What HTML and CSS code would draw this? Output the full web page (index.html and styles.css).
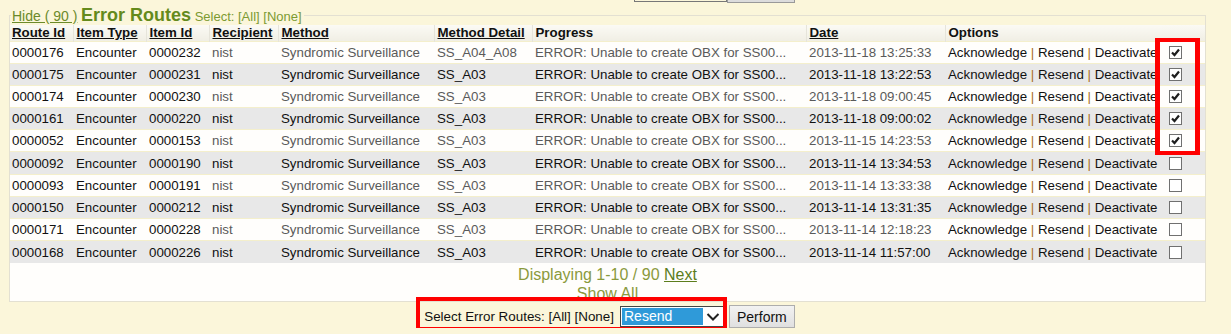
FILE: index.html
```html
<!DOCTYPE html>
<html lang="en">
<head>
    <meta charset="UTF-8">
    <title>Error Routes</title>
    <link rel="stylesheet" href="styles.css">
</head>
<body>
<!-- tail of the bulk bar from the block above -->
<div class="top-tail">
    <span class="tail-select"></span>
    <span class="tail-btn"></span>
</div>

<fieldset class="routes">
    <legend>
        <a href="#" class="toggle">Hide ( 90 )</a>
        <span class="title">Error Routes</span>
        <span class="select-links">Select: [All] [None]</span>
    </legend>
    <div class="routes-box">
        <table class="routes-table">
            <thead>
            <tr>
                <th class="c-id"><a href="#">Route Id</a></th>
                <th class="c-type"><a href="#">Item Type</a></th>
                <th class="c-item"><a href="#">Item Id</a></th>
                <th class="c-rcpt"><a href="#">Recipient</a></th>
                <th class="c-method"><a href="#">Method</a></th>
                <th class="c-detail"><a href="#">Method Detail</a></th>
                <th class="c-progress">Progress</th>
                <th class="c-date"><a href="#">Date</a></th>
                <th class="c-opts">Options</th>
                <th class="c-check"></th>
            </tr>
            </thead>
            <tbody>
            <tr>
                <td>0000176</td><td>Encounter</td><td>0000232</td><td class="soft">nist</td>
                <td class="soft">Syndromic Surveillance</td><td class="soft">SS_A04_A08</td>
                <td class="soft">ERROR: Unable to create OBX for SS00...</td><td class="soft">2013-11-18 13:25:33</td>
                <td class="opts">Acknowledge <i>|</i> Resend <i>|</i> Deactivate</td>
                <td><span class="cb checked"><svg viewBox="0 0 11 11"><path d="M2 5.5 L4.5 8 L9 2.5"/></svg></span></td>
            </tr>
            <tr>
                <td>0000175</td><td>Encounter</td><td>0000231</td><td class="soft">nist</td>
                <td class="soft">Syndromic Surveillance</td><td class="soft">SS_A03</td>
                <td class="soft">ERROR: Unable to create OBX for SS00...</td><td class="soft">2013-11-18 13:22:53</td>
                <td class="opts">Acknowledge <i>|</i> Resend <i>|</i> Deactivate</td>
                <td><span class="cb checked"><svg viewBox="0 0 11 11"><path d="M2 5.5 L4.5 8 L9 2.5"/></svg></span></td>
            </tr>
            <tr>
                <td>0000174</td><td>Encounter</td><td>0000230</td><td class="soft">nist</td>
                <td class="soft">Syndromic Surveillance</td><td class="soft">SS_A03</td>
                <td class="soft">ERROR: Unable to create OBX for SS00...</td><td class="soft">2013-11-18 09:00:45</td>
                <td class="opts">Acknowledge <i>|</i> Resend <i>|</i> Deactivate</td>
                <td><span class="cb checked"><svg viewBox="0 0 11 11"><path d="M2 5.5 L4.5 8 L9 2.5"/></svg></span></td>
            </tr>
            <tr>
                <td>0000161</td><td>Encounter</td><td>0000220</td><td class="soft">nist</td>
                <td class="soft">Syndromic Surveillance</td><td class="soft">SS_A03</td>
                <td class="soft">ERROR: Unable to create OBX for SS00...</td><td class="soft">2013-11-18 09:00:02</td>
                <td class="opts">Acknowledge <i>|</i> Resend <i>|</i> Deactivate</td>
                <td><span class="cb checked"><svg viewBox="0 0 11 11"><path d="M2 5.5 L4.5 8 L9 2.5"/></svg></span></td>
            </tr>
            <tr>
                <td>0000052</td><td>Encounter</td><td>0000153</td><td class="soft">nist</td>
                <td class="soft">Syndromic Surveillance</td><td class="soft">SS_A03</td>
                <td class="soft">ERROR: Unable to create OBX for SS00...</td><td class="soft">2013-11-15 14:23:53</td>
                <td class="opts">Acknowledge <i>|</i> Resend <i>|</i> Deactivate</td>
                <td><span class="cb checked"><svg viewBox="0 0 11 11"><path d="M2 5.5 L4.5 8 L9 2.5"/></svg></span></td>
            </tr>
            <tr>
                <td>0000092</td><td>Encounter</td><td>0000190</td><td class="soft">nist</td>
                <td class="soft">Syndromic Surveillance</td><td class="soft">SS_A03</td>
                <td class="soft">ERROR: Unable to create OBX for SS00...</td><td class="soft">2013-11-14 13:34:53</td>
                <td class="opts">Acknowledge <i>|</i> Resend <i>|</i> Deactivate</td>
                <td><span class="cb"></span></td>
            </tr>
            <tr>
                <td>0000093</td><td>Encounter</td><td>0000191</td><td class="soft">nist</td>
                <td class="soft">Syndromic Surveillance</td><td class="soft">SS_A03</td>
                <td class="soft">ERROR: Unable to create OBX for SS00...</td><td class="soft">2013-11-14 13:33:38</td>
                <td class="opts">Acknowledge <i>|</i> Resend <i>|</i> Deactivate</td>
                <td><span class="cb"></span></td>
            </tr>
            <tr>
                <td>0000150</td><td>Encounter</td><td>0000212</td><td class="soft">nist</td>
                <td class="soft">Syndromic Surveillance</td><td class="soft">SS_A03</td>
                <td class="soft">ERROR: Unable to create OBX for SS00...</td><td class="soft">2013-11-14 13:31:35</td>
                <td class="opts">Acknowledge <i>|</i> Resend <i>|</i> Deactivate</td>
                <td><span class="cb"></span></td>
            </tr>
            <tr>
                <td>0000171</td><td>Encounter</td><td>0000228</td><td class="soft">nist</td>
                <td class="soft">Syndromic Surveillance</td><td class="soft">SS_A03</td>
                <td class="soft">ERROR: Unable to create OBX for SS00...</td><td class="soft">2013-11-14 12:18:23</td>
                <td class="opts">Acknowledge <i>|</i> Resend <i>|</i> Deactivate</td>
                <td><span class="cb"></span></td>
            </tr>
            <tr>
                <td>0000168</td><td>Encounter</td><td>0000226</td><td class="soft">nist</td>
                <td class="soft">Syndromic Surveillance</td><td class="soft">SS_A03</td>
                <td class="soft">ERROR: Unable to create OBX for SS00...</td><td class="soft">2013-11-14 11:57:00</td>
                <td class="opts">Acknowledge <i>|</i> Resend <i>|</i> Deactivate</td>
                <td><span class="cb"></span></td>
            </tr>
            </tbody>
        </table>
        <div class="pager">
            Displaying 1-10 / 90 <a href="#">Next</a><br>
            <span class="show-all">Show All</span>
        </div>
    </div>
</fieldset>

<div class="bulk-bar">
    <span class="bulk-label">Select Error Routes: [All] [None]</span>
    <span class="fake-select">
        <span class="fake-value">Resend</span>
        <svg class="chev" viewBox="0 0 14 10"><path d="M1.5 2 L7 7.5 L12.5 2"/></svg>
    </span>
    <button type="button" class="perform">Perform</button>
</div>

<!-- annotation marks -->
<div class="mark mark-checks"></div>
<div class="mark mark-bulk"></div>
</body>
</html>
```

FILE: styles.css
```css
:root {
    --page-bg: #fbf6da;
    --olive: #6a8c22;
    --olive-light: #8a9a3c;
    --line: #e3e0d2;
    --row-alt: #e8e8e8;
    --row-line: #f4efcc;
}

* {
    box-sizing: border-box;
}

body {
    margin: 0;
    background: var(--page-bg);
    font-family: 'Liberation Sans', Arial, sans-serif;
    font-size: 13px;
    color: #111;
    position: relative;
}

.top-tail {
    height: 3px;
    overflow: hidden;
    display: flex;
    padding-left: 634px;
}

.tail-select {
    width: 93px;
    height: 2px;
    border: 1px solid #777;
    border-top: none;
}

.tail-btn {
    width: 68px;
    height: 3px;
    background: #dcdcdc;
    border: 1px solid #999;
    border-top: none;
}

.routes {
    margin: 2px 25px 0 9px;
    padding: 0;
    border: 1px solid var(--line);
    min-width: 0;
}

.routes legend {
    padding: 0 2px 0 1px;
    margin-left: 1px;
    line-height: 20px;
    height: 20px;
    color: var(--olive);
}

.toggle {
    color: #6b8a2a;
    font-size: 14px;
}

.title {
    font-size: 18px;
    font-weight: bold;
    color: #648a1c;
}

.select-links {
    color: #7c9a32;
}

.routes-box {
    background: #fffefc;
    height: 276px;
    overflow: hidden;
}

.routes-table {
    border-collapse: collapse;
    table-layout: fixed;
    width: 1195px;
    font-size: 13.3px;
}

.routes-table th {
    height: 16px;
    padding: 0 3px;
    text-align: left;
    font-weight: bold;
    white-space: nowrap;
    background: linear-gradient(#fbfaf4, #f0eee4);
    border-left: 1px solid #e6e4da;
    line-height: 14px;
}

.routes-table th:first-child {
    border-left: none;
    padding-left: 2px;
}

.routes-table th.c-check {
    border-left: none;
}

.routes-table th a {
    color: #111;
}

.c-id { width: 63px; }
.c-type { width: 73px; }
.c-item { width: 63px; }
.c-rcpt { width: 69px; }
.c-method { width: 156px; }
.c-detail { width: 98px; }
.c-progress { width: 274px; }
.c-date { width: 139px; }
.c-opts { width: 217px; }

.routes-table td {
    height: 22.2px;
    padding: 0 3px;
    white-space: nowrap;
    overflow: hidden;
    border-top: 1px solid var(--row-line);
    color: #111;
}

.routes-table td:first-child {
    padding-left: 2px;
}

.routes-table td.soft {
    color: #5a5a5a;
}

.routes-table tbody tr:nth-child(even) td {
    background: var(--row-alt);
    color: #111;
}

.opts i {
    font-style: normal;
    color: #a8701e;
}

.cb {
    display: inline-block;
    width: 13px;
    height: 13px;
    border: 1px solid #707070;
    background: #fff;
    margin-left: 4px;
    vertical-align: middle;
    position: relative;
    top: -1px;
}

.cb svg {
    display: block;
    width: 11px;
    height: 11px;
}

.cb path {
    fill: none;
    stroke: #1e1e1e;
    stroke-width: 2.2;
}

.pager {
    text-align: center;
    font-size: 16px;
    line-height: 19px;
    padding-top: 2px;
    color: var(--olive-light);
}

.pager a {
    color: #5c7d1c;
}

.bulk-bar {
    display: flex;
    justify-content: center;
    align-items: center;
    gap: 6px;
    margin-top: 3px;
    padding-right: 12px;
}

.bulk-label {
    color: #111;
    font-size: 13.4px;
}

.fake-select {
    display: flex;
    align-items: center;
    width: 104px;
    height: 21px;
    border: 1px solid #444;
    background: #fff;
    padding: 1px;
}

.fake-value {
    flex: 1;
    height: 100%;
    background: #2f9ad9;
    color: #fff;
    font-size: 14px;
    line-height: 17px;
    padding-left: 2px;
}

.chev {
    width: 16px;
    height: 10px;
    margin: 0 1px 0 2px;
}

.chev path {
    fill: none;
    stroke: #222;
    stroke-width: 2;
}

.perform {
    height: 23px;
    padding: 0 7px;
    font-family: inherit;
    font-size: 14px;
    color: #111;
    background: linear-gradient(#f2f2f2, #e0e0e0);
    border: 1px solid #adadad;
    margin-left: -1px;
}

.mark {
    position: absolute;
    border: 4px solid #ff0000;
    pointer-events: none;
}

.mark-checks {
    left: 1155px;
    top: 38px;
    width: 45px;
    height: 117px;
    border-width: 4px 5px;
}

.mark-bulk {
    left: 416px;
    top: 297px;
    width: 311px;
    height: 34px;
}
```
